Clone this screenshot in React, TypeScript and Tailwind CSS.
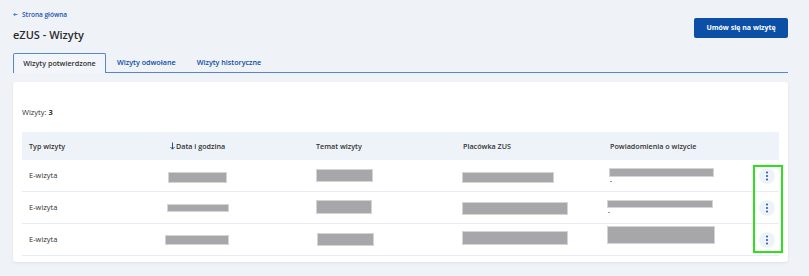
import React from "react";

type Box = { ml: number; mt: number; w: number; h: number; dot?: boolean };

const rows: { data: Box; temat: Box; plac: Box; pow: Box }[] = [
  {
    data: { ml: -2, mt: 12, w: 59, h: 11 },
    temat: { ml: 0, mt: 9, w: 57, h: 13 },
    plac: { ml: -1, mt: 12, w: 92, h: 11 },
    pow: { ml: -1, mt: 8, w: 105, h: 9, dot: true },
  },
  {
    data: { ml: -3, mt: 12, w: 62, h: 8 },
    temat: { ml: 0, mt: 8, w: 56, h: 14 },
    plac: { ml: -1, mt: 10, w: 106, h: 13 },
    pow: { ml: -3, mt: 8, w: 106, h: 8, dot: true },
  },
  {
    data: { ml: -5, mt: 11, w: 64, h: 10 },
    temat: { ml: 1, mt: 9, w: 57, h: 13 },
    plac: { ml: -1, mt: 7, w: 106, h: 14 },
    pow: { ml: -3, mt: 2, w: 108, h: 18 },
  },
];

function Redact({ b }: { b: Box }) {
  return (
    <div className="flex flex-col items-start">
      <div
        className="bg-[#a7a7aa] border border-[#d4d4d6]"
        style={{ marginLeft: b.ml, marginTop: b.mt, width: b.w, height: b.h }}
      />
      {b.dot && <div className="mt-[4px] w-[2px] h-[1px] bg-[#9a9a9a]" style={{ marginLeft: b.ml + 1 }} />}
    </div>
  );
}

function Dots() {
  return (
    <svg width="4" height="10" viewBox="0 0 4 10">
      <circle cx="2" cy="1.5" r="1" fill="#1a55a8" />
      <circle cx="2" cy="5" r="1" fill="#1a55a8" />
      <circle cx="2" cy="8.5" r="1" fill="#1a55a8" />
    </svg>
  );
}

const cols = "grid grid-cols-[141px_146px_147px_147px_142px_34px]";

export default function App() {
  return (
    <div
      className="w-[809px] h-[276px] bg-[#eff3f8] pl-[13px] pr-[21px] overflow-hidden relative"
      style={{ fontFamily: '"Open Sans", "Noto Sans", sans-serif' }}
    >
      <div className="flex justify-between">
        <div className="pt-[10px]">
          <div className="flex items-center gap-[4px] text-[6.5px] leading-[9px] font-semibold text-[#1956ad]">
            <svg width="5" height="5" viewBox="0 0 10 10">
              <path d="M9 5H1.5M4.5 2 1.5 5l3 3" stroke="#1956ad" strokeWidth="1.4" fill="none" />
            </svg>
            <span>Strona główna</span>
          </div>
          <div className="mt-[7px] text-[11px] leading-[18px] font-semibold text-[#2b2b2b]">eZUS - Wizyty</div>
        </div>
        <div className="pt-[18px]">
          <div className="w-[94px] h-[20px] rounded-[2px] bg-[#0b4fa6] text-white text-[7px] font-bold flex items-center justify-center">
            Umów się na wizytę
          </div>
        </div>
      </div>

      <div className="mt-[9px] flex items-end border-b border-[#5a86c4] h-[20px]">
        <div className="h-[20px] w-[93px] -mb-px border border-b-0 border-[#5a86c4] rounded-t-[2px] bg-[#f2f5f9] flex items-center justify-center text-[7.2px] font-semibold text-[#333]">
          Wizyty potwierdzone
        </div>
        <div className="h-[19px] pl-[11px] flex items-center text-[7.2px] font-semibold text-[#0c4ea5]">Wizyty odwołane</div>
        <div className="h-[19px] pl-[21px] flex items-center text-[7.2px] font-semibold text-[#0c4ea5]">Wizyty historyczne</div>
      </div>

      <div className="mt-[9px] bg-white rounded-[3px] shadow-[0_1px_3px_rgba(0,0,0,0.08)] px-[9px] pt-[24px] pb-[6px]">
        <div className="text-[7.5px] leading-[12px] text-[#333]">
          Wizyty: <span className="font-bold">3</span>
        </div>
        <div className="mt-[14px]">
          <div className={`${cols} h-[28px] bg-[#eef3f9] items-center text-[7.2px] font-semibold text-[#333]`}>
            <div className="px-[7px]">Typ wizyty</div>
            <div className="px-[7px] flex items-center">
              <svg width="5" height="8" viewBox="0 0 5 8" className="mr-[1px]">
                <path d="M2.5 0.5V7M0.5 5 2.5 7.2 4.5 5" stroke="#1a55a8" strokeWidth="1" fill="none" />
              </svg>
              Data i godzina
            </div>
            <div className="px-[7px]">Temat wizyty</div>
            <div className="px-[7px]">Placówka ZUS</div>
            <div className="px-[7px]">Powiadomienia o wizycie</div>
            <div />
          </div>
          {rows.map((r, i) => (
            <div key={i} className={`${cols} h-[32px] border-b border-[#e6edf6] text-[7.5px] text-[#333]`}>
              <div className="px-[7px] flex items-center">E-wizyta</div>
              <div className="px-[7px]"><Redact b={r.data} /></div>
              <div className="px-[7px]"><Redact b={r.temat} /></div>
              <div className="px-[7px]"><Redact b={r.plac} /></div>
              <div className="px-[7px]"><Redact b={r.pow} /></div>
              <div className="flex items-center justify-end pr-[4px]">
                <div className="w-[16px] h-[16px] rounded-full bg-[#eef3f9] flex items-center justify-center">
                  <Dots />
                </div>
              </div>
            </div>
          ))}
        </div>
      </div>

      <div className="absolute left-[753px] top-[165px] w-[30px] h-[88px] border-2 border-[#2fe01c]" />
    </div>
  );
}
